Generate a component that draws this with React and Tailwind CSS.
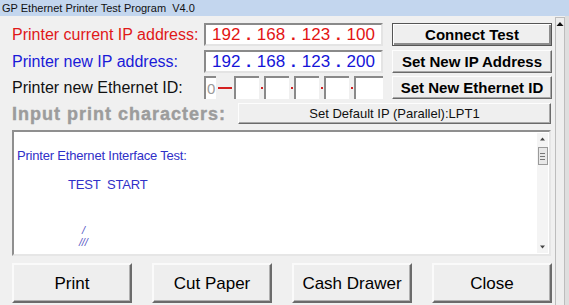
import React from 'react';

const font = "font-['Liberation_Sans',Arial,sans-serif]";

function IpBox({ parts, color }) {
  const items = [];
  parts.forEach((p, i) => {
    if (i > 0) items.push(<span key={`d${i}`} className="font-bold">.</span>);
    items.push(<span key={p + i}>{p}</span>);
  });
  return (
    <div
      className={`flex h-[23px] w-[179px] items-center justify-between border-2 border-t-[#8a8a8a] border-l-[#8a8a8a] border-r-[#e4e4e4] border-b-[#e4e4e4] bg-white px-[6px] text-[17px] leading-none ${color}`}
    >
      {items}
    </div>
  );
}

function SideButton({ children, focused }) {
  return (
    <button
      className={`h-[23px] w-[160px] bg-[#efefef] text-[15px] font-bold leading-none text-black ${
        focused
          ? 'border border-[#555] shadow-[inset_1px_1px_0_#fff,inset_-2px_-2px_0_#8c8c8c]'
          : 'border border-t-[#fdfdfd] border-l-[#fdfdfd] border-r-[#6a6a6a] border-b-[#6a6a6a] shadow-[inset_-1px_-1px_0_#a8a8a8]'
      }`}
    >
      {children}
    </button>
  );
}

function BigButton({ children }) {
  return (
    <button className="h-[40px] w-[120px] border-2 border-t-[#fafafa] border-l-[#fafafa] border-r-[#6b6b6b] border-b-[#6b6b6b] bg-[#eeeeee] text-[17px] leading-none text-black shadow-[inset_-1px_-1px_0_#b0b0b0]">
      {children}
    </button>
  );
}

function IdField({ w, children }) {
  return (
    <div
      className="flex h-[23px] items-center border-t-2 border-l-2 border-t-[#8a8a8a] border-l-[#8a8a8a] bg-white pl-[1px] text-[15px] leading-none text-[#9a9a9a]"
      style={{ width: w }}
    >
      {children}
    </div>
  );
}

function RedTick() {
  return (
    <div className="flex h-[23px] w-[5px] items-center pl-[2px]">
      <div className="h-[2px] w-[2px] bg-[#d42020]" />
    </div>
  );
}

export default function App() {
  return (
    <div className={`flex h-[305px] w-[569px] flex-col overflow-hidden bg-[#f0f0f0] ${font}`}>
      <div className="h-[16px] whitespace-pre bg-[#c3d6ee] pl-[2px] text-[11px] leading-[16px] text-[#111]">
        GP Ethernet Printer Test Program  V4.0
      </div>

      <div className="flex flex-1">
        <div className="flex w-[555px] flex-col pl-[12px] pt-[7px]">
          {/* row 1 */}
          <div className="flex h-[23px] items-center">
            <span className="w-[192px] text-[16px] leading-none text-[#e01818]">Printer current IP address:</span>
            <IpBox parts={['192', '168', '123', '100']} color="text-[#e31414]" />
            <div className="ml-[9px]">
              <SideButton focused>Connect Test</SideButton>
            </div>
          </div>

          {/* row 2 */}
          <div className="mt-[4px] flex h-[23px] items-center">
            <span className="w-[192px] text-[16px] leading-none text-[#1a1ad8]">Printer new IP address:</span>
            <IpBox parts={['192', '168', '123', '200']} color="text-[#1414d8]" />
            <div className="ml-[9px]">
              <SideButton>Set New IP Address</SideButton>
            </div>
          </div>

          {/* row 3 */}
          <div className="mt-[3px] flex h-[23px] items-center">
            <span className="w-[192px] text-[16px] leading-none text-[#111]">Printer new Ethernet ID:</span>
            <IdField w={12}>0</IdField>
            <div className="ml-[2px] mr-[2px] h-[2px] w-[14px] bg-[#d42020]" />
            <IdField w={25} />
            <RedTick />
            <IdField w={25} />
            <RedTick />
            <IdField w={25} />
            <RedTick />
            <IdField w={25} />
            <RedTick />
            <IdField w={29} />
            <div className="ml-[9px]">
              <SideButton>Set New Ethernet ID</SideButton>
            </div>
          </div>

          {/* row 4 */}
          <div className="mt-[4px] flex h-[21px] items-center">
            <span className="w-[226px] text-[18px] font-bold leading-none tracking-[1px] text-[#9c9c9c] [-webkit-text-stroke:0.4px_#9c9c9c]">
              Input print characters:
            </span>
            <button className="h-[21px] w-[313px] border border-t-[#fdfdfd] border-l-[#fdfdfd] border-r-[#6a6a6a] border-b-[#6a6a6a] bg-[#efefef] text-[13px] leading-none text-[#111] shadow-[inset_-1px_-1px_0_#a8a8a8]">
              Set Default IP (Parallel):LPT1
            </button>
          </div>

          {/* output area */}
          <div className="mt-[6px] flex h-[126px] w-[539px] border-2 border-t-[#8f8f8f] border-l-[#8f8f8f] border-r-[#e6e6e6] border-b-[#e6e6e6] bg-white">
            <div className="flex-1 pl-[3px] pt-[17px] text-[13px] leading-[14px] tracking-[-0.2px] text-[#3030c8]">
              <p>Printer Ethernet Interface Test:</p>
              <p className="mt-[15px] whitespace-pre pl-[51px]">TEST  START</p>
              <p className="mt-[33px] pl-[65px] text-[11px] italic leading-[11px] text-[#5656c4]">/</p>
              <p className="mt-[1px] pl-[62px] text-[11px] italic leading-[11px] text-[#5656c4]">///</p>
            </div>
            <div className="my-[1px] mr-[1px] flex w-[11px] flex-col items-center bg-[#f4f4f4]">
              <svg width="7" height="6" viewBox="0 0 7 6" className="mt-[3px]">
                <path d="M1 4.5 3.5 1.5 6 4.5Z" fill="#444" />
              </svg>
              <div className="mt-[5px] flex h-[18px] w-[10px] flex-col items-center justify-center gap-[2px] border border-[#9a9a9a] bg-[#e8e8e8]">
                <div className="h-px w-[5px] bg-[#777]" />
                <div className="h-px w-[5px] bg-[#777]" />
                <div className="h-px w-[5px] bg-[#777]" />
              </div>
              <div className="flex-1" />
              <svg width="7" height="6" viewBox="0 0 7 6" className="mb-[3px]">
                <path d="M1 1.5 3.5 4.5 6 1.5Z" fill="#444" />
              </svg>
            </div>
          </div>

          {/* bottom buttons */}
          <div className="mt-[7px] flex gap-[20px]">
            <BigButton>Print</BigButton>
            <BigButton>Cut Paper</BigButton>
            <BigButton>Cash Drawer</BigButton>
            <BigButton>Close</BigButton>
          </div>
        </div>

        {/* window scrollbar */}
        <div className="mt-[1px] flex w-[10px] flex-col items-center border-x border-t border-[#bdbdbd] bg-[#eeeeee]">
          <svg width="8" height="6" viewBox="0 0 8 6" className="mt-[3px]">
            <path d="M0.5 5 4 1 7.5 5Z" fill="#111" />
          </svg>
        </div>
        <div className="w-[4px] bg-[#dedede]" />
      </div>
    </div>
  );
}
